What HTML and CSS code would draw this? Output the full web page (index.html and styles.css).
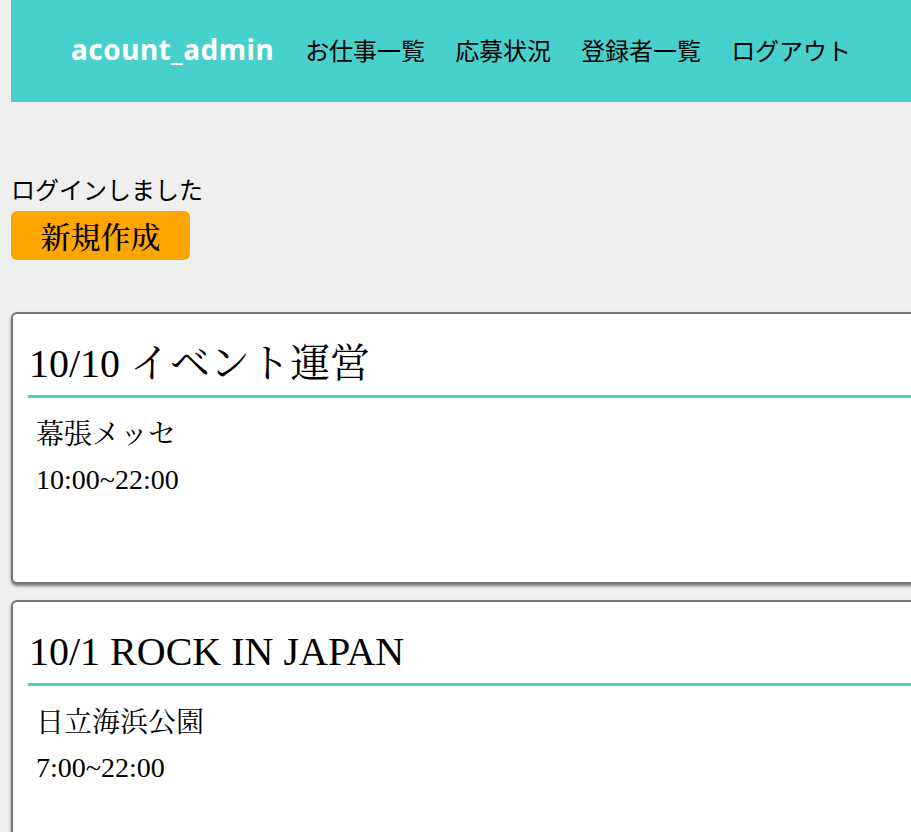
FILE: index.html
```html
<!DOCTYPE html>
<html lang="ja">
<head>
<meta charset="utf-8">
<title>acount_admin</title>
<link rel="stylesheet" href="styles.css">
</head>
<body>
<div class="page">
  <header class="header">
    <a class="brand" href="#">acount_admin</a>
    <nav class="nav">
      <a href="#">お仕事一覧</a>
      <a href="#">応募状況</a>
      <a href="#">登録者一覧</a>
      <a href="#">ログアウト</a>
    </nav>
  </header>

  <p class="notice">ログインしました</p>
  <a class="btn-new" href="#">新規作成</a>

  <div class="cards">
    <article class="card">
      <h2 class="card-title">10/10 イベント運営</h2>
      <div class="card-body">
        <p class="place">幕張メッセ</p>
        <p class="time">10:00~22:00</p>
      </div>
    </article>
    <article class="card">
      <h2 class="card-title">10/1 ROCK IN JAPAN</h2>
      <div class="card-body">
        <p class="place">日立海浜公園</p>
        <p class="time">7:00~22:00</p>
      </div>
    </article>
  </div>
</div>
</body>
</html>
```

FILE: styles.css
```css
html {
  background: #efefef;
}
body {
  margin: 0;
  background: #efefef;
  overflow: hidden;
}
.page {
  margin-left: 11px;
  width: 1000px;
}
.header {
  height: 102px;
  background: #48d1cc;
  display: flex;
  align-items: center;
  gap: 31px;
  padding-left: 60px;
  padding-bottom: 4px;
  box-sizing: border-box;
}
.brand {
  font-family: "Noto Sans", "Open Sans", sans-serif;
  font-weight: 700;
  font-size: 28px;
  color: #fff;
  text-decoration: none;
  letter-spacing: 0.5px;
}
.nav {
  display: flex;
  gap: 30px;
}
.nav a {
  font-family: "Noto Sans CJK JP", sans-serif;
  font-size: 24px;
  color: #000;
  text-decoration: none;
}
.notice {
  margin: 65px 0 0;
  font-family: "Noto Sans CJK JP", sans-serif;
  font-size: 24px;
  line-height: 44px;
  color: #000;
}
.btn-new {
  display: inline-block;
  height: 49px;
  width: 179px;
  box-sizing: border-box;
  text-align: center;
  line-height: 49px;
  background: #ffa500;
  border-radius: 6px;
  color: #000;
  text-decoration: none;
  font-family: "Noto Serif CJK JP", "Liberation Serif", "Noto Sans CJK JP", serif;
  font-size: 30px;
  font-weight: 500;
}
.cards {
  margin-top: 52px;
  display: flex;
  flex-direction: column;
  gap: 16px;
}
.card {
  height: 272px;
  box-sizing: border-box;
  background: #fff;
  border: 2px solid #777;
  border-radius: 6px;
  box-shadow: 0 2px 3px #777;
}
.card-title {
  margin: 26px 0 0 15px;
  padding: 0 0 7px 1px;
  border-bottom: 3px solid #48d1cc;
  font-family: "Liberation Serif", "Noto Serif CJK JP", "Noto Sans CJK JP", serif;
  font-weight: 400;
  font-size: 40px;
  line-height: 48px;
  color: #000;
}
.card-body {
  padding: 14px 0 0 23px;
  font-family: "Liberation Serif", "Noto Serif CJK JP", "Noto Sans CJK JP", serif;
  font-size: 28px;
  line-height: 45px;
  color: #000;
}
.card-body p {
  margin: 0;
}
```
